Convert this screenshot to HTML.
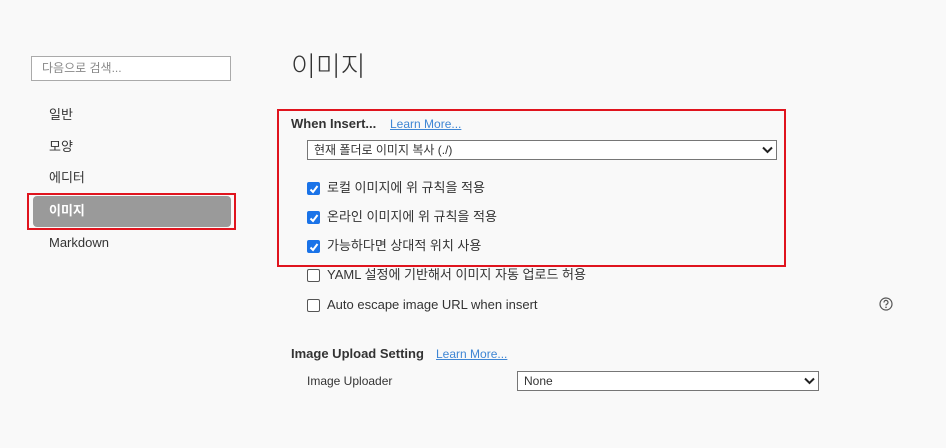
<!DOCTYPE html>
<html><head><meta charset="utf-8"><style>
body{margin:0;width:946px;height:448px;background:#f9f9f9;position:relative;overflow:hidden;font-family:"Liberation Sans","Noto Sans CJK KR",sans-serif;color:#333}
.a{position:absolute;white-space:nowrap}
.nav{left:49px;font-size:13px;color:#333;line-height:16px}
.cb{position:absolute;left:307px;width:11px;height:11px;border:1px solid #555;border-radius:2px;background:#fff}
.cb.on{background:#1a73e8;border-color:#1a73e8}
.lbl{left:327px;font-size:13px;line-height:16px;color:#333}
.lm{font-size:12px;color:#3f86d4;text-decoration:underline}
.sel{position:absolute;background:#fff;border:1px solid #767676;box-sizing:border-box;font-size:12px;color:#333;padding-left:6px;line-height:18px}
</style></head><body>
<div class="a" style="left:31px;top:56px;width:200px;height:25px;border:1px solid #aaa;box-sizing:border-box;background:#fff;font-size:12px;color:#888;padding-left:10px;line-height:23px">다음으로 검색...</div>
<div class="a nav" style="top:107px">일반</div>
<div class="a nav" style="top:139px">모양</div>
<div class="a nav" style="top:170px">에디터</div>
<div class="a" style="left:27px;top:193px;width:205px;height:33px;border:2px solid #e0141e"></div>
<div class="a" style="left:33px;top:196px;width:198px;height:31px;background:#9a9a9a;border-radius:4px"></div>
<div class="a nav" style="top:203px;color:#fff;font-weight:bold">이미지</div>
<div class="a nav" style="top:235px">Markdown</div>
<div class="a" style="left:291px;top:50px;font-size:27px;color:#333;line-height:34px;font-weight:300">이미지</div>
<div class="a" style="left:277px;top:109px;width:505px;height:154px;border:2px solid #e0141e"></div>
<div class="a" style="left:291px;top:116px;font-size:13px;font-weight:bold;line-height:16px">When Insert...</div>
<div class="a lm" style="left:390px;top:117px">Learn More...</div>
<div class="sel" style="left:307px;top:140px;width:470px;height:20px">현재 폴더로 이미지 복사 (./)</div>
<svg class="a" style="left:762px;top:146px" width="11" height="8"><path d="M1 1.5L5.5 6L10 1.5" fill="none" stroke="#222" stroke-width="2"/></svg>
<div class="cb on" style="top:182px"></div><svg class="a" style="left:308px;top:183px" width="12" height="12"><path d="M2.5 6.5L5 9L9.5 3" fill="none" stroke="#fff" stroke-width="2"/></svg>
<div class="a lbl" style="top:180px">로컬 이미지에 위 규칙을 적용</div>
<div class="cb on" style="top:211px"></div><svg class="a" style="left:308px;top:212px" width="12" height="12"><path d="M2.5 6.5L5 9L9.5 3" fill="none" stroke="#fff" stroke-width="2"/></svg>
<div class="a lbl" style="top:209px">온라인 이미지에 위 규칙을 적용</div>
<div class="cb on" style="top:240px"></div><svg class="a" style="left:308px;top:241px" width="12" height="12"><path d="M2.5 6.5L5 9L9.5 3" fill="none" stroke="#fff" stroke-width="2"/></svg>
<div class="a lbl" style="top:238px">가능하다면 상대적 위치 사용</div>
<div class="cb" style="top:269px"></div>
<div class="a lbl" style="top:267px">YAML 설정에 기반해서 이미지 자동 업로드 허용</div>
<div class="cb" style="top:299px"></div>
<div class="a lbl" style="top:297px">Auto escape image URL when insert</div>
<svg class="a" style="left:879px;top:297px" width="14" height="14"><circle cx="7" cy="7" r="6" fill="none" stroke="#555" stroke-width="1.2"/><path d="M5 5.5a2 2 0 1 1 2.5 1.8c-.5.2-.5.6-.5 1.2" fill="none" stroke="#555" stroke-width="1.2"/><circle cx="7" cy="10.3" r=".8" fill="#555"/></svg>
<div class="a" style="left:291px;top:346px;font-size:13px;font-weight:bold;line-height:16px">Image Upload Setting</div>
<div class="a lm" style="left:436px;top:347px">Learn More...</div>
<div class="a" style="left:307px;top:374px;font-size:12px;line-height:15px">Image Uploader</div>
<div class="sel" style="left:517px;top:371px;width:302px;height:20px">None</div>
<svg class="a" style="left:804px;top:377px" width="11" height="8"><path d="M1 1.5L5.5 6L10 1.5" fill="none" stroke="#222" stroke-width="2"/></svg>
</body></html>
